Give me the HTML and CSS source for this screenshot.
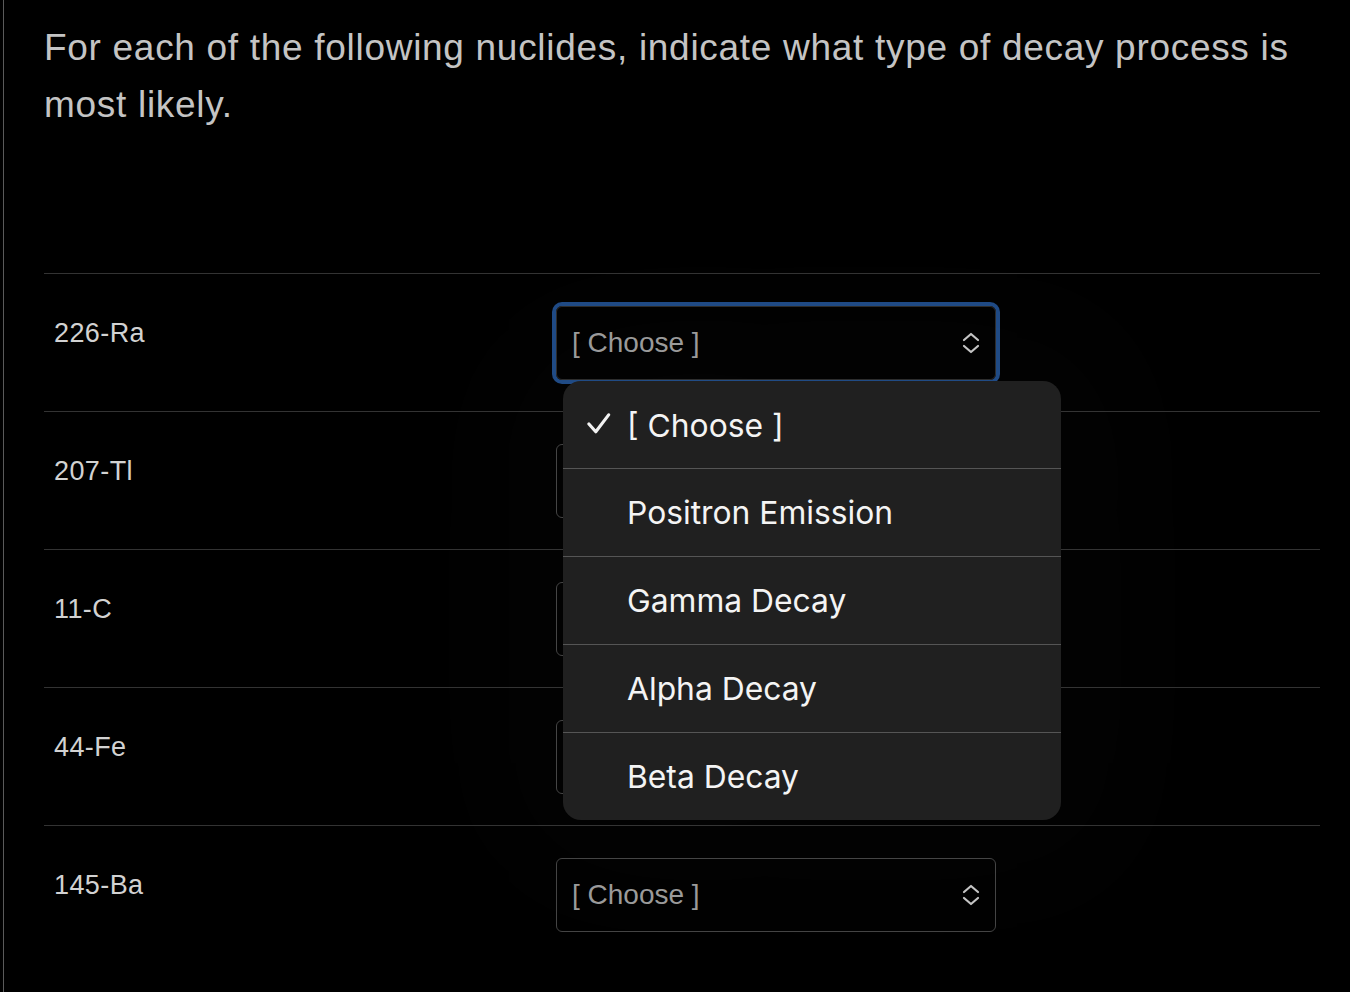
FILE: index.html
```html
<!DOCTYPE html>
<html>
<head>
<meta charset="utf-8">
<link rel="stylesheet" href="styles.css">
</head>
<body>
<div class="frame">
  <p class="question">For each of the following nuclides, indicate what type of decay process is most likely.</p>
  <div class="table">
    <div class="row">
      <div class="label">226-Ra</div>
      <div class="cell">
        <div class="select focused"><span>[ Choose ]</span>
          <svg class="chev" viewBox="0 0 20 22"><path d="M3 8 L10 2 L17 8 M3 14 L10 20 L17 14"/></svg>
        </div>
        <div class="menu">
          <div class="item"><svg class="check" viewBox="0 0 26 24"><path d="M2 12 L9.5 20.5 L23.5 2"/></svg>[ Choose ]</div>
          <div class="item">Positron Emission</div>
          <div class="item">Gamma Decay</div>
          <div class="item">Alpha Decay</div>
          <div class="item">Beta Decay</div>
        </div>
      </div>
    </div>
    <div class="row">
      <div class="label">207-Tl</div>
      <div class="cell"><div class="select"><span>[ Choose ]</span>
        <svg class="chev" viewBox="0 0 20 22"><path d="M3 8 L10 2 L17 8 M3 14 L10 20 L17 14"/></svg></div></div>
    </div>
    <div class="row">
      <div class="label">11-C</div>
      <div class="cell"><div class="select"><span>[ Choose ]</span>
        <svg class="chev" viewBox="0 0 20 22"><path d="M3 8 L10 2 L17 8 M3 14 L10 20 L17 14"/></svg></div></div>
    </div>
    <div class="row">
      <div class="label">44-Fe</div>
      <div class="cell"><div class="select"><span>[ Choose ]</span>
        <svg class="chev" viewBox="0 0 20 22"><path d="M3 8 L10 2 L17 8 M3 14 L10 20 L17 14"/></svg></div></div>
    </div>
    <div class="row">
      <div class="label">145-Ba</div>
      <div class="cell"><div class="select"><span>[ Choose ]</span>
        <svg class="chev" viewBox="0 0 20 22"><path d="M3 8 L10 2 L17 8 M3 14 L10 20 L17 14"/></svg></div></div>
    </div>
  </div>
</div>
</body>
</html>
```
FILE: styles.css
```css
html, body {
  margin: 0;
  padding: 0;
  background: #000;
  height: 100%;
  overflow: hidden;
}
.frame {
  margin-left: 3px;
  border-left: 1.5px solid #5a5a5a;
  min-height: 992px;
  padding-left: 40px;
  padding-top: 19px;
  box-sizing: border-box;
  font-family: "Liberation Sans", Arial, sans-serif;
}
.question {
  margin: 0;
  width: 1262px;
  font-size: 37px;
  letter-spacing: 0.7px;
  line-height: 57px;
  color: #c4c4c4;
}
.table {
  margin-top: 140px;
  width: 1276px;
}
.row {
  display: grid;
  grid-template-columns: 512px 440px;
  border-top: 1.5px solid #333;
  height: 138px;
  box-sizing: border-box;
  padding-top: 32px;
}
.label {
  padding-left: 10px;
  margin-top: 12px;
  font-size: 27px;
  letter-spacing: 0.4px;
  line-height: 30px;
  color: #d2d2d2;
}
.cell {
  position: relative;
}
.select {
  height: 74px;
  box-sizing: border-box;
  border: 1.5px solid #444;
  border-radius: 6px;
  display: flex;
  align-items: center;
  justify-content: space-between;
  padding: 0 14px 0 15px;
  font-size: 28px;
  color: #9a9a9a;
}
.select.focused {
  border-color: #2c2c2c;
  box-shadow: 0 0 0 4px #1f4a85;
}
.chev {
  width: 20px;
  height: 22px;
  fill: none;
  stroke: #c4c4c4;
  stroke-width: 2.2;
  stroke-linecap: round;
  stroke-linejoin: round;
}
.menu {
  position: absolute;
  left: 7px;
  top: 75px;
  width: 498px;
  background: #202020;
  border-radius: 18px;
  z-index: 10;
  box-shadow: 0 0 160px 60px rgba(255,255,255,0.015);
  font-family: Inter, "Noto Sans", sans-serif;
}
.item {
  position: relative;
  height: 88px;
  box-sizing: border-box;
  padding-left: 64px;
  display: flex;
  align-items: center;
  font-size: 31.8px;
  color: #f4f4f4;
  border-top: 1px solid #555;
}
.item:first-child {
  border-top: none;
  height: 87px;
  padding-top: 2px;
}
.check {
  position: absolute;
  left: 24px;
  top: 32px;
  width: 24px;
  height: 22px;
  fill: none;
  stroke: #f2f2f2;
  stroke-width: 3.4;
  stroke-linecap: round;
  stroke-linejoin: round;
}
```
